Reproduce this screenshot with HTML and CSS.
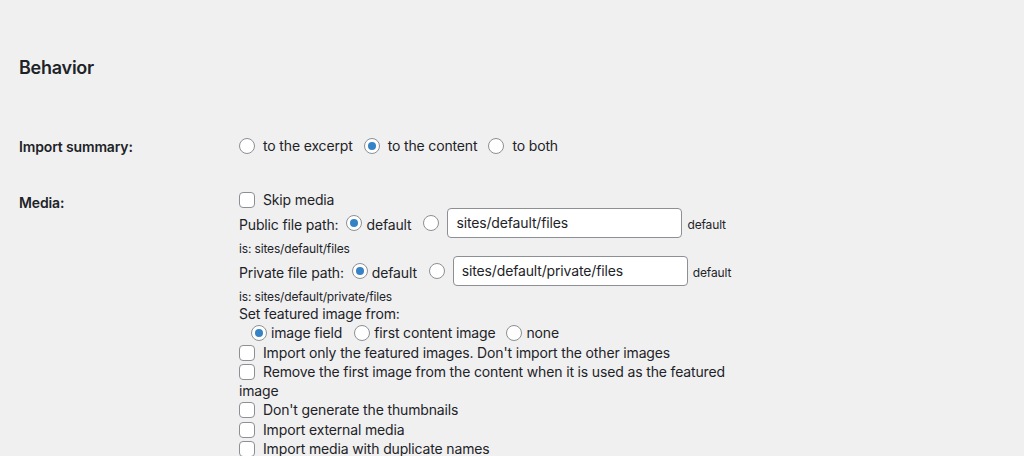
FILE: index.html
```html
<!DOCTYPE html>
<html lang="en">
<head>
<meta charset="utf-8">
<title>Behavior</title>
<link rel="stylesheet" href="styles.css">
</head>
<body>
<div class="wrap">
  <h2 class="section-title">Behavior</h2>
  <div class="form-table">
    <div class="th row1">Import summary:</div>
    <div class="td row1">
      <div class="choices">
        <label class="choice"><span class="radio"></span><span>to the excerpt</span></label>
        <label class="choice"><span class="radio checked"></span><span>to the content</span></label>
        <label class="choice"><span class="radio"></span><span>to both</span></label>
      </div>
    </div>

    <div class="th row2">Media:</div>
    <div class="td row2">
      <div class="line"><span class="checkbox"></span>Skip media</div>

      <div class="path-row">
        <span class="path-label">Public file path:</span>
        <span class="radio checked gap-l8"></span>
        <span class="path-label gap-l4">default</span>
        <span class="radio gap-l12"></span>
        <span class="text-input gap-l8">sites/default/files</span>
        <span class="small gap-l5">default</span>
      </div>
      <div class="desc">is: sites/default/files</div>

      <div class="path-row path-row-2">
        <span class="path-label">Private file path:</span>
        <span class="radio checked gap-l8"></span>
        <span class="path-label gap-l4">default</span>
        <span class="radio gap-l12"></span>
        <span class="text-input gap-l8">sites/default/private/files</span>
        <span class="small gap-l5">default</span>
      </div>
      <div class="desc">is: sites/default/private/files</div>

      <div class="line">Set featured image from:</div>
      <div class="line featured">
        <label class="fchoice"><span class="radio checked"></span><span>image field</span></label>
        <label class="fchoice f2"><span class="radio"></span><span>first content image</span></label>
        <label class="fchoice f3"><span class="radio"></span><span>none</span></label>
      </div>

      <div class="line"><span class="checkbox"></span>Import only the featured images. Don't import the other images</div>
      <div class="line"><span class="checkbox"></span>Remove the first image from the content when it is used as the featured image</div>
      <div class="line"><span class="checkbox"></span>Don't generate the thumbnails</div>
      <div class="line"><span class="checkbox"></span>Import external media</div>
      <div class="line"><span class="checkbox"></span>Import media with duplicate names</div>
    </div>
  </div>
</div>
</body>
</html>
```

FILE: styles.css
```css
html, body {
  margin: 0;
  padding: 0;
  background: #f0f0f1;
}

body {
  font-family: Inter, "Noto Sans", sans-serif;
  font-size: 14px;
  color: #1d2327;
  letter-spacing: -0.15px;
}

.wrap {
  padding: 56px 0 0 19px;
}

.section-title {
  margin: 0;
  font-size: 18px;
  line-height: 24px;
  font-weight: 600;
  letter-spacing: -0.25px;
}

.form-table {
  margin-top: 38px;
  display: grid;
  grid-template-columns: 210px 497px;
  column-gap: 10px;
}

.th {
  font-weight: 600;
  line-height: 18px;
}

.th.row1 { padding: 20px 0 18px 0; }
.th.row2 { padding: 20px 0 0 0; }

.td.row1 { padding: 18px 0 0 0; }
.td.row2 { padding: 16px 0 0 0; }

.choices {
  display: flex;
  align-items: center;
  gap: 11px;
  line-height: 20px;
}

.choice {
  display: flex;
  align-items: center;
  gap: 8px;
}

.radio {
  display: inline-block;
  box-sizing: border-box;
  width: 16px;
  height: 16px;
  border: 1px solid #8c8f94;
  border-radius: 50%;
  background: #fff;
  position: relative;
  flex: none;
}

.radio.checked::after {
  content: "";
  position: absolute;
  left: 3px;
  top: 3px;
  width: 8px;
  height: 8px;
  border-radius: 50%;
  background: #3582c4;
}

.checkbox {
  display: inline-block;
  box-sizing: border-box;
  width: 16px;
  height: 16px;
  border: 1px solid #8c8f94;
  border-radius: 4px;
  background: #fff;
  vertical-align: -3px;
  margin-right: 8px;
}

.line {
  line-height: 19.3px;
}

.path-row {
  display: flex;
  align-items: center;
  height: 30px;
  margin-top: -1.3px;
}

.path-row-2 {
  margin-top: 0;
}

.path-label {
  padding-top: 2px;
}

.gap-l4 { margin-left: 4px; }
.gap-l5 { margin-left: 5px; }
.gap-l8 { margin-left: 8px; }
.gap-l12 { margin-left: 12px; }

.text-input {
  box-sizing: border-box;
  width: 235px;
  height: 30px;
  padding: 0 8px;
  border: 1px solid #8c8f94;
  border-radius: 4px;
  background: #fff;
  line-height: 28px;
  font-size: 14px;
}

.small {
  font-size: 12px;
  padding-top: 2px;
}

.desc {
  font-size: 12px;
  line-height: 15px;
  padding-top: 3px;
}

.featured {
  display: flex;
  align-items: center;
  padding-left: 12px;
}

.fchoice {
  display: flex;
  align-items: center;
  gap: 4px;
}

.f2 { margin-left: 12px; }
.f3 { margin-left: 11px; }
```
